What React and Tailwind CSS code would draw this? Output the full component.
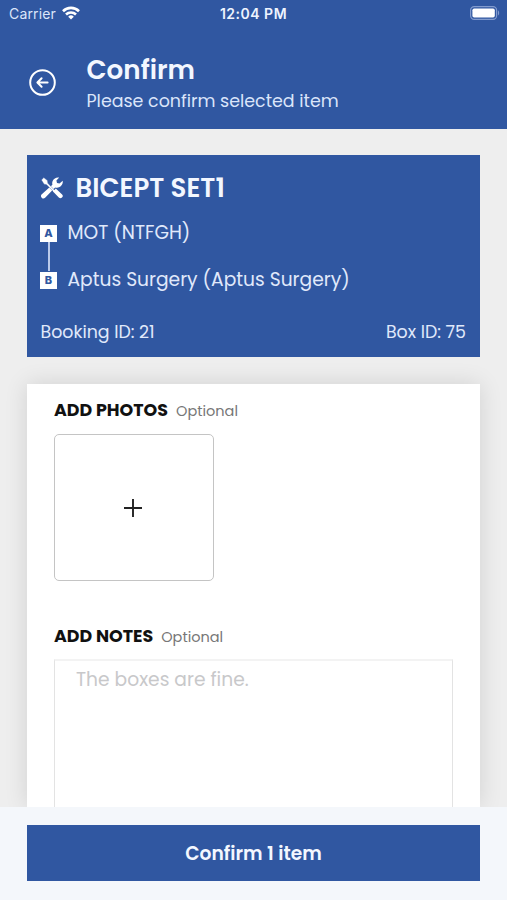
function ToolsIcon() {
  return (
    <svg className="ml-[0.5px] size-[22px]" viewBox="0 0 22 22" fill="white">
      {/* wrench */}
      <path d="M18.2.5a5.9 5.9 0 0 0-6.8 7.3L.8 17.3a2.2 2.2 0 0 0 3.3 3.5L14.1 10.4a5.9 5.9 0 0 0 7.6-6.6l-3.2 2.8-2.5-.5-.6-2.5Z" />
      {/* screwdriver */}
      <path d="M2.8.6.4 3l2.7 4.2 2.5.5L13 15.2l1.3-1.3-7.4-7.6-.4-2.7Z" stroke="#3057a1" strokeWidth=".4" />
      <path d="M14.8 11.6 12 14.4l5.8 6.2a2.3 2.3 0 0 0 3.3-3.2Z" />
    </svg>
  );
}

function StatusBar() {
  return (
    <div className="flex h-7 items-center justify-between pl-[9px] pr-[7px] font-['Inter',sans-serif]">
      <div className="flex w-40 items-center gap-[6px]">
        <span className="text-[14px] leading-none tracking-[0.15px] text-[#dbe5fa]">Carrier</span>
        <svg className="mb-[2px] h-[14px] w-[18px]" viewBox="0 0 18 14" fill="none" stroke="white" strokeWidth="2.6">
          <path d="M1 5.2a11.4 11.4 0 0 1 16 0" />
          <path d="M4 8.5a7.2 7.2 0 0 1 10 0" />
          <path d="M9 13.6 6.2 10.7a4 4 0 0 1 5.6 0Z" fill="white" stroke="none" />
        </svg>
      </div>
      <span className="mr-[2px] text-[14px] font-semibold leading-none tracking-[0.5px] text-[#eef4ff]">12:04 PM</span>
      <div className="flex w-40 justify-end">
        <svg className="mb-[2px] h-[14px] w-[30px]" viewBox="0 0 30 14">
          <rect x=".6" y=".6" width="26" height="12.8" rx="3.6" fill="none" stroke="#829bce" strokeWidth="1.2" />
          <rect x="2.4" y="2.4" width="22.4" height="9.2" rx="1.8" fill="white" />
          <path d="M28 4.6c1.5.5 1.5 4.3 0 4.8Z" fill="#829bce" />
        </svg>
      </div>
    </div>
  );
}

function Header() {
  return (
    <header className="h-[129px] shrink-0 bg-[#3057a1]">
      <StatusBar />
      <div className="flex pl-[29px] pt-[26px]">
        <button className="mt-[15px] size-[27px]" aria-label="Back">
          <svg viewBox="0 0 27 27" fill="none" stroke="white" strokeWidth="2" strokeLinecap="round" strokeLinejoin="round">
            <circle cx="13.5" cy="13.5" r="12.3" />
            <path d="M18.6 13.5H8.6M12.6 9.3l-4.2 4.2 4.2 4.2" />
          </svg>
        </button>
        <div className="ml-[30.5px] whitespace-nowrap">
          <h1 className="text-[26.2px] font-semibold leading-8 text-[#f3f7ff]">Confirm</h1>
          <p className="text-[17.45px] leading-[30px] text-[#dbe5fa]">Please confirm selected item</p>
        </div>
      </div>
    </header>
  );
}

function Stop({ letter, children }) {
  return (
    <div className="flex h-[18px] items-center gap-[10.5px]">
      <span className="flex size-[17px] items-center justify-center bg-white font-['Inter',sans-serif] text-[11px] font-extrabold leading-none text-[#3057a1]">
        {letter}
      </span>
      <span className="text-[18.67px]">{children}</span>
    </div>
  );
}

function BookingCard() {
  return (
    <section className="h-[202px] shrink-0 whitespace-nowrap bg-[#3057a1] pl-[13px] pr-[14px] text-[#e0e9fb]">
      <div className="flex h-[66px] items-center gap-[13px]">
        <ToolsIcon />
        <h2 className="text-[26.1px] font-semibold leading-[38px] text-[#f3f7ff]">BICEPT SET1</h2>
      </div>
      <div className="mt-[3px]">
        <Stop letter="A">MOT (NTFGH)</Stop>
        <div className="ml-2 h-[29px] w-[1.5px] bg-[#b9c9ea]" />
        <Stop letter="B">Aptus Surgery (Aptus Surgery)</Stop>
      </div>
      <div className="mt-[29px] flex justify-between pl-[0.5px] text-[17.4px] leading-7">
        <span>Booking ID: 21</span>
        <span>Box ID: 75</span>
      </div>
    </section>
  );
}

function SectionTitle({ children }) {
  return (
    <div className="flex h-[27px] items-center gap-[8px]">
      <h3 className="text-[17.45px] font-bold text-[#111]">{children}</h3>
      <span className="pt-0.5 text-[14.5px] text-[#777]">Optional</span>
    </div>
  );
}

function FormCard() {
  return (
    <section className="mt-[27px] min-h-0 flex-1 bg-white px-[27px] pt-[13px] shadow-[0_0_22px_rgba(0,0,0,0.12)]">
      <SectionTitle>ADD PHOTOS</SectionTitle>
      <button className="mt-[10px] flex h-[147px] w-[160px] items-center justify-center rounded-[5px] border border-[#c4c4c4]" aria-label="Add photo">
        <svg className="mr-[3px] size-[18px]" viewBox="0 0 18 18" stroke="#222" strokeWidth="1.9">
          <path d="M9 0v18M0 9h18" />
        </svg>
      </button>
      <div className="mt-[42px]">
        <SectionTitle>ADD NOTES</SectionTitle>
      </div>
      <div className="mt-[9px] h-[148px] w-[399px] border-x border-t-2 border-x-[#e3e3e3] border-t-[#f3f3f3] pl-[21px] pt-[5px]">
        <span className="text-[18.67px] leading-7 text-[#c8c8ca]">The boxes are fine.</span>
      </div>
    </section>
  );
}

export default function App() {
  return (
    <div className="flex h-[900px] w-[507px] flex-col overflow-hidden bg-[#eeeeee] font-['Poppins','Inter',sans-serif]">
      <Header />
      <main className="flex min-h-0 flex-1 flex-col overflow-hidden px-[27px] pt-[26px]">
        <BookingCard />
        <FormCard />
      </main>
      <footer className="h-[93px] shrink-0 bg-[#f4f7fb] px-[27px] pt-[18px]">
        <button className="flex h-[56px] w-full items-center justify-center bg-[#3057a1] pt-[2px] text-[18.67px] font-semibold text-[#f3f7ff]">
          Confirm 1 item
        </button>
      </footer>
    </div>
  );
}
